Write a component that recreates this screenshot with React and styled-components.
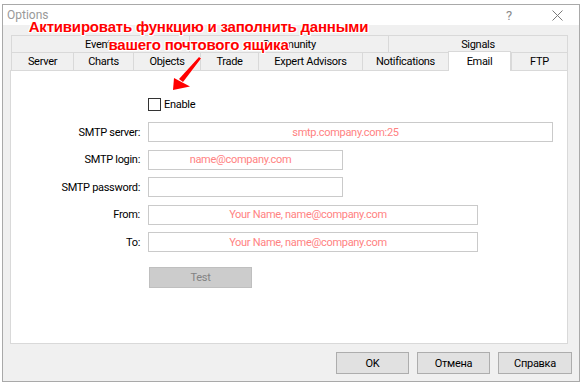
import React from "react";
import styled, { createGlobalStyle } from "styled-components";

const Global = createGlobalStyle`
  html, body { margin: 0; padding: 0; background: #fff; }
  body {
    width: 581px; height: 384px; overflow: hidden;
    font-family: Roboto, "Liberation Sans", sans-serif;
    font-size: 11px; letter-spacing: -0.3px; color: #000;
  }
`;

const Stage = styled.div`
  position: relative;
  width: 581px;
  height: 384px;
  box-sizing: border-box;
  padding: 4px 0 0 2px;
  background: #fff;
`;

const Window = styled.div`
  width: 578px;
  height: 378px;
  box-sizing: border-box;
  border: 1px solid #a9a9a9;
  background: #f0f0f0;
  display: flex;
  flex-direction: column;
`;

const TitleBar = styled.div`
  height: 20px;
  flex: none;
  background: #fff;
  display: flex;
  align-items: center;
  padding-left: 4px;
  color: #999;
  font-size: 12px;
  letter-spacing: 0;
`;

const TitleText = styled.span`
  flex: 1;
`;

const HelpGlyph = styled.span`
  width: 12px;
  text-align: center;
  color: #8a8a8a;
  font-size: 13px;
  margin-right: 36px;
`;

const CloseBox = styled.span`
  width: 12px;
  height: 12px;
  display: flex;
  align-items: center;
  justify-content: center;
  margin-right: 16px;
`;

const Body = styled.div`
  flex: 1;
  display: flex;
  flex-direction: column;
  padding: 10px 0 0 7px;
`;

const Tabs = styled.div`
  width: 558px;
  display: flex;
  flex-direction: column;
`;

const TabRow = styled.div`
  display: flex;
  align-items: flex-end;
  height: ${(p) => p.$h}px;
  padding-left: 1px;
`;

const Tab = styled.div`
  position: relative;
  box-sizing: border-box;
  width: ${(p) => p.$w}px;
  height: ${(p) => (p.$active ? "calc(100% + 2px)" : "100%")};
  margin-bottom: ${(p) => (p.$active ? "-1px" : "0")};
  z-index: ${(p) => (p.$active ? 1 : 0)};
  background: ${(p) => (p.$active ? "#fff" : "#f0f0f0")};
  border-left: 1px solid #d9d9d9;
  border-top: 1px solid #d9d9d9;
  border-right: ${(p) => (p.$last || p.$active ? "1px solid #d9d9d9" : "none")};
  display: flex;
  align-items: center;
  justify-content: center;
  white-space: nowrap;
`;

const Panel = styled.div`
  height: 274px;
  box-sizing: border-box;
  border: 1px solid #d9d9d9;
  background: #fff;
`;

const Form = styled.div`
  display: grid;
  grid-template-columns: 129px auto;
  column-gap: 8px;
  row-gap: 7.5px;
  padding-top: 27px;
  justify-items: start;
  align-items: center;
`;

const Label = styled.div`
  justify-self: end;
  white-space: nowrap;
`;

const CheckRow = styled.label`
  display: flex;
  align-items: center;
  gap: 3px;
  height: 13px;
  margin-bottom: 3.5px;
`;

const CheckBox = styled.span`
  width: 13px;
  height: 13px;
  box-sizing: border-box;
  border: 1px solid #333;
  background: #fff;
`;

const Field = styled.div`
  width: ${(p) => p.$w}px;
  height: 20px;
  box-sizing: border-box;
  padding-right: 10px;
  border: 1px solid #cacaca;
  background: #fff;
  color: #ff8282;
  display: flex;
  align-items: center;
  justify-content: center;
  white-space: nowrap;
`;

const TestButton = styled.div`
  width: 103px;
  height: 21px;
  margin: 7.5px 0 0 1px;
  box-sizing: border-box;
  border: 1px solid #bfbfbf;
  background: #cccccc;
  color: #838383;
  display: flex;
  align-items: center;
  justify-content: center;
`;

const Footer = styled.div`
  display: flex;
  justify-content: flex-end;
  gap: 8px;
  margin-top: 8px;
  padding-right: 7px;
`;

const Button = styled.div`
  width: ${(p) => p.$w}px;
  height: 22px;
  box-sizing: border-box;
  border: 1px solid #adadad;
  background: #e1e1e1;
  display: flex;
  align-items: center;
  justify-content: center;
`;

const Note = styled.div`
  position: absolute;
  left: 0;
  top: 18px;
  width: 397px;
  text-align: center;
  white-space: nowrap;
  font-family: "Liberation Sans", Arial, sans-serif;
  font-weight: bold;
  font-size: 15px;
  letter-spacing: -0.2px;
  line-height: 17.5px;
  color: #ff0000;
  text-shadow:
    -1px -1px 0 #fff, 1px -1px 0 #fff, -1px 1px 0 #fff, 1px 1px 0 #fff,
    0 -1px 0 #fff, 0 1px 0 #fff, -1px 0 0 #fff, 1px 0 0 #fff;
`;

const Arrow = styled.svg`
  position: absolute;
  left: 165px;
  top: 52px;
  overflow: visible;
  pointer-events: none;
`;

const row1 = [
  { t: "Events", w: 178 },
  { t: "Community", w: 199 },
  { t: "Signals", w: 180 },
];

const row2 = [
  { t: "Server", w: 62 },
  { t: "Charts", w: 60 },
  { t: "Objects", w: 67 },
  { t: "Trade", w: 58 },
  { t: "Expert Advisors", w: 104 },
  { t: "Notifications", w: 86 },
  { t: "Email", w: 63, active: true },
  { t: "FTP", w: 57 },
];

export default function App() {
  return (
    <>
      <Global />
      <Stage>
        <Window>
          <TitleBar>
            <TitleText>Options</TitleText>
            <HelpGlyph>?</HelpGlyph>
            <CloseBox>
              <svg width="11" height="11" viewBox="0 0 11 11">
                <path d="M0.5 0.5 L10.5 10.5 M10.5 0.5 L0.5 10.5" stroke="#7a7a7a" strokeWidth="1" fill="none" />
              </svg>
            </CloseBox>
          </TitleBar>
          <Body>
            <Tabs>
              <TabRow $h={17}>
                {row1.map((r, i) => (
                  <Tab key={r.t} $w={r.w} $last={i === row1.length - 1}>
                    {r.t}
                  </Tab>
                ))}
              </TabRow>
              <TabRow $h={18}>
                {row2.map((r, i) => (
                  <Tab key={r.t} $w={r.w} $active={r.active} $last={i === row2.length - 1}>
                    {r.t}
                  </Tab>
                ))}
              </TabRow>
              <Panel>
                <Form>
                  <span />
                  <CheckRow>
                    <CheckBox />
                    Enable
                  </CheckRow>
                  <Label>SMTP server:</Label>
                  <Field $w={405}>smtp.company.com:25</Field>
                  <Label>SMTP login:</Label>
                  <Field $w={195}>name@company.com</Field>
                  <Label>SMTP password:</Label>
                  <Field $w={195} />
                  <Label>From:</Label>
                  <Field $w={330}>Your Name, name@company.com</Field>
                  <Label>To:</Label>
                  <Field $w={330}>Your Name, name@company.com</Field>
                  <span />
                  <TestButton>Test</TestButton>
                </Form>
              </Panel>
            </Tabs>
            <Footer>
              <Button $w={73}>OK</Button>
              <Button $w={73}>Отмена</Button>
              <Button $w={74}>Справка</Button>
            </Footer>
          </Body>
        </Window>
        <Note>
          Активировать функцию и заполнить данными
          <br />
          вашего почтового ящика
        </Note>
        <Arrow width="40" height="42" viewBox="0 0 40 42">
          <g fill="#f00" stroke="#fff" strokeWidth="1" paintOrder="stroke" strokeLinejoin="round">
            <path d="M34 5 L36 6.5 L18 30 L14 27 Z" />
            <path d="M8 38 L9 26 L25 34.5 Z" />
          </g>
        </Arrow>
      </Stage>
    </>
  );
}
